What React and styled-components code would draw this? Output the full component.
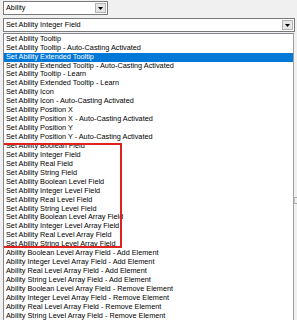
import React from "react";
import styled, { createGlobalStyle } from "styled-components";

const Global = createGlobalStyle`
  html, body { margin: 0; padding: 0; background: #f0f0f0; overflow: hidden; }
  body { font-family: "Liberation Sans", Arial, sans-serif; }
`;

const Page = styled.div`
  width: 297px;
  height: 320px;
  box-sizing: border-box;
  padding: 1px 0 0 3px;
  display: flex;
  flex-direction: column;
  font-size: 7.3px;
  color: #000;
  overflow: hidden;
`;

const Combo = styled.div`
  box-sizing: border-box;
  flex: none;
  width: ${(p) => p.$w}px;
  height: 14px;
  border: 1px solid #7a7a7a;
  background: #fff;
  display: flex;
  align-items: center;
  padding: 1px 1px 1px 2px;
  margin-top: ${(p) => p.$mt || 0}px;
`;

const ComboText = styled.span`
  flex: 1;
  white-space: nowrap;
  line-height: 10px;
`;

const ArrowButton = styled.div`
  box-sizing: border-box;
  width: 11px;
  height: 10px;
  background: #e6e6e6;
  border: 1px solid #b4b4b4;
  display: flex;
  align-items: center;
  justify-content: center;
`;

const Arrow = () => (
  <svg width="5" height="3" viewBox="0 0 5 3">
    <path d="M0 0H5L2.5 3Z" fill="#000" />
  </svg>
);

const ListRow = styled.div`
  flex: 1;
  min-height: 0;
  display: flex;
  margin-top: 1px;
`;

const List = styled.div`
  box-sizing: border-box;
  width: 291px;
  border: 1px solid #828790;
  border-right-color: #a0a0a0;
  border-bottom: none;
  background: #fff;
  padding-top: 0.7px;
  overflow: hidden;
`;

const Item = styled.div`
  height: 8.95px;
  line-height: 8.95px;
  padding-left: 2px;
  white-space: nowrap;
  background: ${(p) => (p.$sel ? "#0078d7" : "transparent")};
  color: ${(p) => (p.$sel ? "#fff" : "#000")};
`;

const Marked = styled.div`
  position: relative;
  &::after {
    content: "";
    position: absolute;
    left: -2px;
    top: 1px;
    width: 120px;
    bottom: 1px;
    box-sizing: border-box;
    border: 2px solid #e0211d;
    pointer-events: none;
  }
`;

const Side = styled.div`
  width: 3px;
  padding-top: 164px;
`;

const Grip = styled.div`
  width: 3px;
  height: 7px;
  border-top: 1px solid #a8a8a8;
  border-bottom: 1px solid #a8a8a8;
  border-left: 1px solid #c4c4c4;
  box-sizing: border-box;
`;

const before = [
  "Set Ability Tooltip",
  "Set Ability Tooltip - Auto-Casting Activated",
  "Set Ability Extended Tooltip",
  "Set Ability Extended Tooltip - Auto-Casting Activated",
  "Set Ability Tooltip - Learn",
  "Set Ability Extended Tooltip - Learn",
  "Set Ability Icon",
  "Set Ability Icon - Auto-Casting Activated",
  "Set Ability Position X",
  "Set Ability Position X - Auto-Casting Activated",
  "Set Ability Position Y",
  "Set Ability Position Y - Auto-Casting Activated",
];

const marked = [
  "Set Ability Boolean Field",
  "Set Ability Integer Field",
  "Set Ability Real Field",
  "Set Ability String Field",
  "Set Ability Boolean Level Field",
  "Set Ability Integer Level Field",
  "Set Ability Real Level Field",
  "Set Ability String Level Field",
  "Set Ability Boolean Level Array Field",
  "Set Ability Integer Level Array Field",
  "Set Ability Real Level Array Field",
  "Set Ability String Level Array Field",
];

const after = [
  "Ability Boolean Level Array Field - Add Element",
  "Ability Integer Level Array Field - Add Element",
  "Ability Real Level Array Field - Add Element",
  "Ability String Level Array Field - Add Element",
  "Ability Boolean Level Array Field - Remove Element",
  "Ability Integer Level Array Field - Remove Element",
  "Ability Real Level Array Field - Remove Element",
  "Ability String Level Array Field - Remove Element",
];

export default function App() {
  return (
    <>
      <Global />
      <Page>
        <Combo $w={105}>
          <ComboText>Ability</ComboText>
          <ArrowButton>
            <Arrow />
          </ArrowButton>
        </Combo>
        <Combo $w={292} $mt={3}>
          <ComboText>Set Ability Integer Field</ComboText>
          <ArrowButton>
            <Arrow />
          </ArrowButton>
        </Combo>
        <ListRow>
          <List>
            {before.map((t, i) => (
              <Item key={t} $sel={i === 2}>
                {t}
              </Item>
            ))}
            <Marked>
              {marked.map((t) => (
                <Item key={t}>{t}</Item>
              ))}
            </Marked>
            {after.map((t) => (
              <Item key={t}>{t}</Item>
            ))}
          </List>
          <Side>
            <Grip />
          </Side>
        </ListRow>
      </Page>
    </>
  );
}
